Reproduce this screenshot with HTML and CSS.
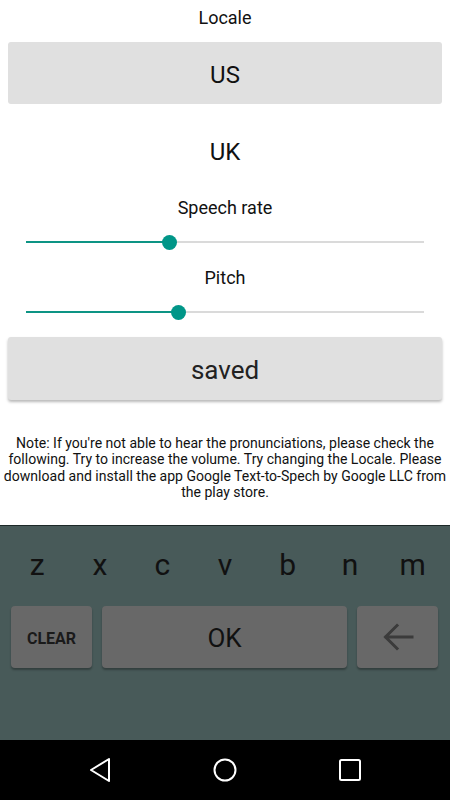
FILE: index.html
```html
<!DOCTYPE html>
<html>
<head>
<meta charset="utf-8">
<link rel="stylesheet" href="styles.css">
</head>
<body>
<div class="screen">
  <main class="content">
    <div class="label label-top">Locale</div>
    <div class="btn btn-flat">US</div>
    <div class="btn btn-plain">UK</div>
    <div class="label label-rate">Speech rate</div>
    <div class="slider">
      <div class="track"><div class="fill" style="width:36%"></div></div>
      <div class="thumb" style="left:36%"></div>
    </div>
    <div class="label label-pitch">Pitch</div>
    <div class="slider">
      <div class="track"><div class="fill" style="width:38.4%"></div></div>
      <div class="thumb" style="left:38.4%"></div>
    </div>
    <div class="btn btn-raised">saved</div>
    <p class="note">Note: If you're not able to hear the pronunciations, please check the following. Try to increase the volume. Try changing the Locale. Please download and install the app Google Text-to-Spech by Google LLC from the play store.</p>
  </main>
  <section class="keyboard">
    <div class="letters">
      <span>z</span><span>x</span><span>c</span><span>v</span><span>b</span><span>n</span><span>m</span>
    </div>
    <div class="keys">
      <div class="key key-clear">CLEAR</div>
      <div class="key key-ok">OK</div>
      <div class="key key-back">
        <svg width="32" height="32" viewBox="0 0 32 32"><path d="M30 16H4M15 4.5L3.5 16L15 27.5" fill="none" stroke="#3b3b3b" stroke-width="3" stroke-linecap="square"/></svg>
      </div>
    </div>
  </section>
  <nav class="navbar">
    <svg class="nav-icon" width="24" height="26" viewBox="0 0 24 26"><path d="M21 2L3 13L21 24Z" fill="none" stroke="#fff" stroke-width="2" stroke-linejoin="round"/></svg>
    <svg class="nav-icon" width="26" height="26" viewBox="0 0 26 26"><circle cx="13" cy="13" r="10.5" fill="none" stroke="#fff" stroke-width="2"/></svg>
    <svg class="nav-icon" width="24" height="24" viewBox="0 0 24 24"><rect x="2" y="2" width="20" height="20" rx="1.5" fill="none" stroke="#fff" stroke-width="2"/></svg>
  </nav>
</div>
</body>
</html>
```
FILE: styles.css
```css
* { box-sizing: border-box; }
html, body { margin: 0; padding: 0; }
body {
  width: 450px;
  height: 800px;
  overflow: hidden;
  font-family: Roboto, "Noto Sans", sans-serif;
  color: #000;
  background: #fff;
}
.screen {
  display: flex;
  flex-direction: column;
  height: 800px;
}
.content {
  height: 525px;
  display: flex;
  flex-direction: column;
  background: #fff;
}
.label {
  font-size: 18px;
  line-height: 22px;
  text-align: center;
  color: #111;
}
.label-top { margin-top: 7px; }
.label-rate { margin-top: 14px; }
.label-pitch { margin-top: 10px; }
.btn {
  height: 62px;
  margin: 0 8px;
  display: flex;
  align-items: center;
  justify-content: center;
  font-size: 24px;
  color: #111;
  border-radius: 3px;
}
.btn-flat {
  margin-top: 13px;
  padding-top: 4px;
  background: #e0e0e0;
}
.btn-plain {
  margin-top: 17px;
  background: transparent;
}
.btn-raised {
  margin-top: 10px;
  height: 63px;
  padding-top: 2px;
  background: #e0e0e0;
  font-size: 26px;
  color: #222;
  box-shadow: 0 2px 3px rgba(0,0,0,0.28);
}
.slider {
  position: relative;
  height: 30px;
  margin: 8px 26px 0;
}
.track {
  position: absolute;
  left: 0;
  right: 0;
  top: 14px;
  height: 2px;
  background: #dadada;
}
.fill {
  height: 2px;
  background: #0d9484;
}
.thumb {
  position: absolute;
  top: 8px;
  width: 15px;
  height: 15px;
  margin-left: -7.5px;
  border-radius: 50%;
  background: #009688;
}
.note {
  margin: 35px 0 0;
  font-size: 14.05px;
  line-height: 16.3px;
  text-align: center;
  color: #111;
}
.keyboard {
  height: 215px;
  background: #485a59;
  border-top: 1px solid #1c2828;
  padding-top: 20px;
  display: flex;
  flex-direction: column;
}
.letters {
  display: grid;
  grid-template-columns: repeat(7, 1fr);
  padding: 0 6px;
  height: 40px;
}
.letters span {
  text-align: center;
  font-size: 30px;
  line-height: 38px;
  color: #111;
}
.keys {
  margin-top: 20px;
  display: grid;
  grid-template-columns: 81px 1fr 81px;
  gap: 10px;
  padding: 0 12px 0 11px;
}
.key {
  height: 62px;
  background: #686868;
  border-radius: 4px;
  box-shadow: 0 2px 2px rgba(0,0,0,0.3);
  display: flex;
  align-items: center;
  justify-content: center;
  color: #111;
}
.key-clear {
  font-size: 16px;
  font-weight: bold;
  color: #1a1a1a;
  padding-top: 2px;
}
.key-ok {
  font-size: 26px;
  padding-top: 2px;
}
.navbar {
  height: 60px;
  background: #000;
  display: grid;
  grid-template-columns: 1fr 1fr 1fr;
  align-items: center;
  justify-items: center;
  padding: 0 38px;
}
.nav-icon { display: block; }
```
